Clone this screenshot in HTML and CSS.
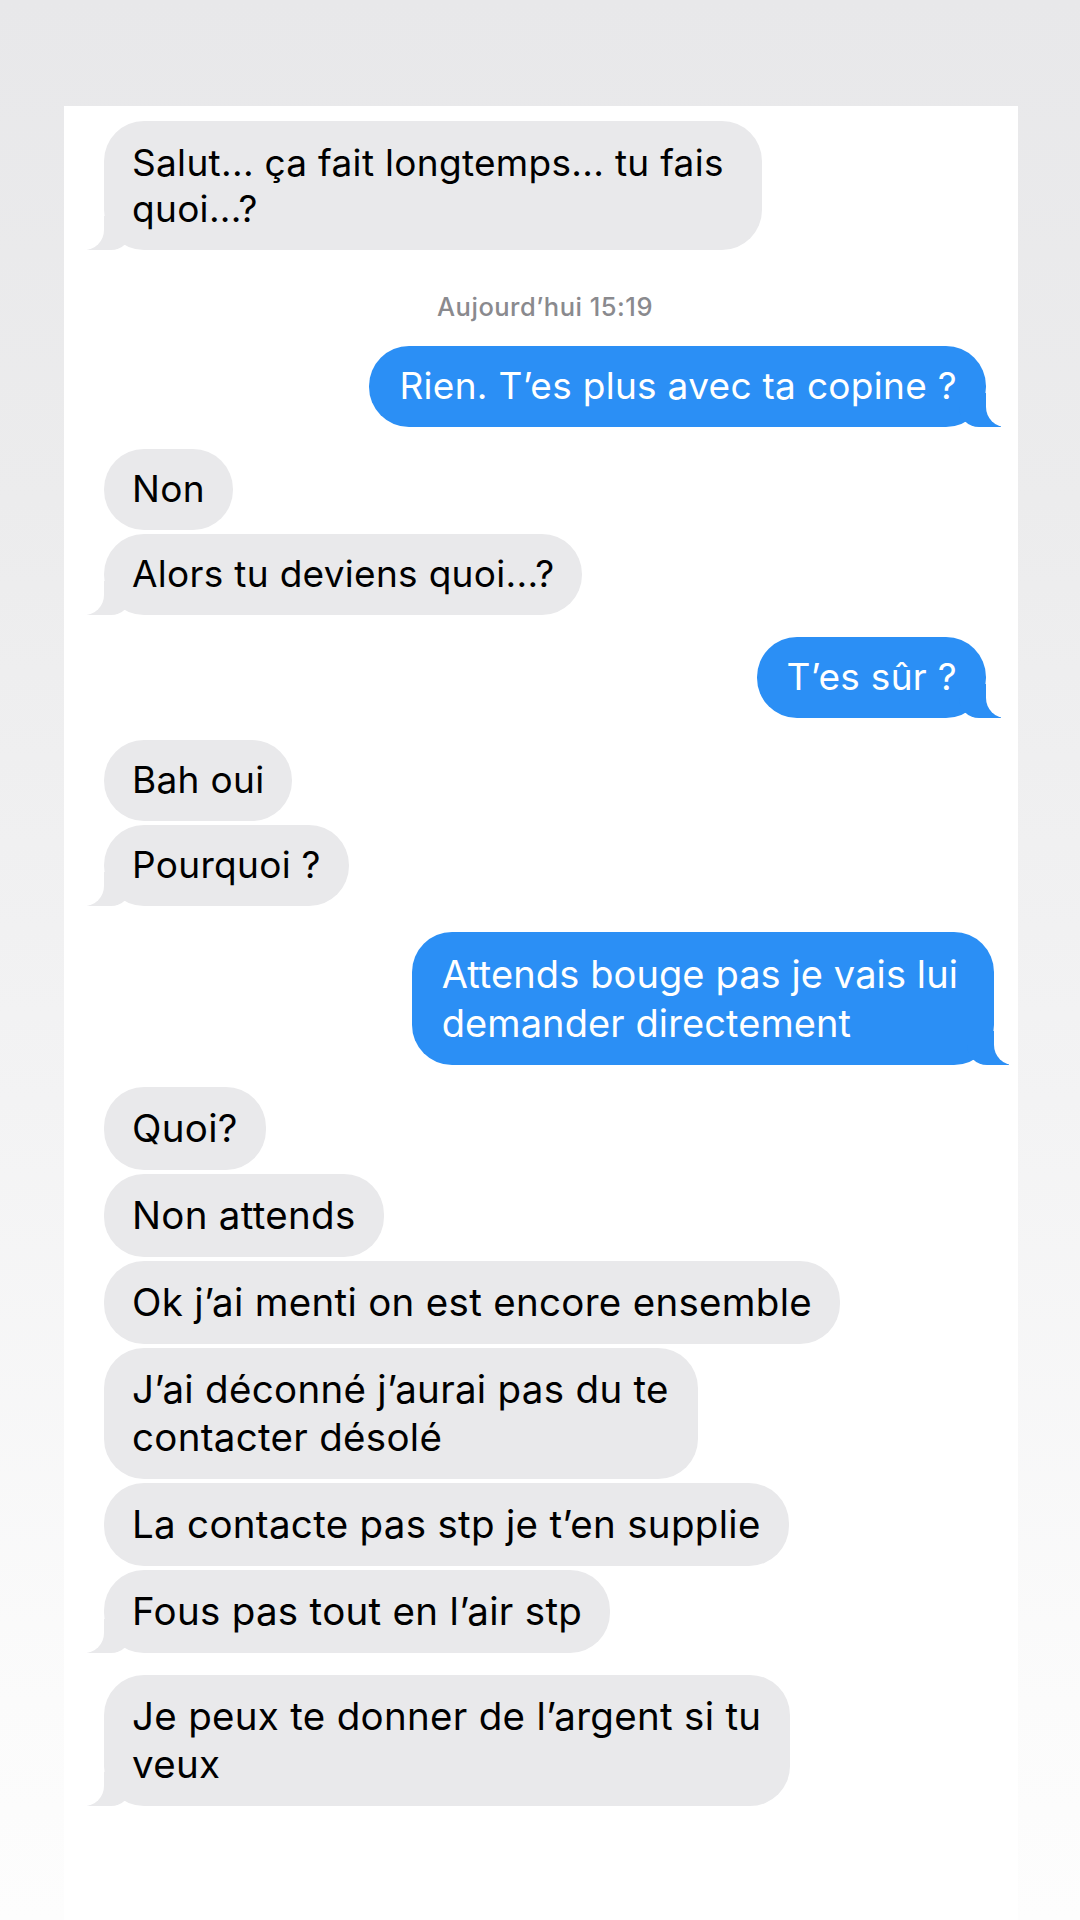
FILE: index.html
```html
<!DOCTYPE html>
<html lang="fr">
<head>
  <meta charset="UTF-8">
  <meta name="viewport" content="width=device-width, initial-scale=1.0">
  <title>Messages</title>
  <link rel="stylesheet" href="styles.css">
</head>
<body>
  <div class="shot">
    <div class="thread">
      <div class="bubble in tail wrap">Salut... ça fait longtemps... tu fais<br>quoi...?</div>

      <div class="stamp">Aujourd’hui 15:19</div>

      <div class="bubble out tail">Rien. T’es plus avec ta copine ?</div>

      <div class="bubble in first">Non</div>
      <div class="bubble in tail">Alors tu deviens quoi...?</div>

      <div class="bubble out tail first">T’es sûr ?</div>

      <div class="bubble in first">Bah oui</div>
      <div class="bubble in tail">Pourquoi ?</div>

      <div class="bubble out tail first big wrap">Attends bouge pas je vais lui<br>demander directement</div>

      <div class="lower">
        <div class="bubble in">Quoi?</div>
        <div class="bubble in">Non attends</div>
        <div class="bubble in">Ok j’ai menti on est encore ensemble</div>
        <div class="bubble in wrap">J’ai déconné j’aurai pas du te<br>contacter désolé</div>
        <div class="bubble in">La contacte pas stp je t’en supplie</div>
        <div class="bubble in tail">Fous pas tout en l’air stp</div>
        <div class="bubble in tail first wrap">Je peux te donner de l’argent si tu<br>veux</div>
      </div>
    </div>
  </div>
</body>
</html>
```

FILE: styles.css
```css
body {
  margin: 0;
  padding-top: 106px;
  min-height: 1814px;
  font-family: Inter, "Liberation Sans", sans-serif;
  background: linear-gradient(#e8e8ea 0, #ececed 500px, #f3f3f4 1100px, #fbfbfb 1700px, #fdfdfd 1920px);
}

.shot {
  margin-left: 64px;
  width: 954px;
  min-height: 1814px;
  background: #fff;
}

.thread {
  display: flex;
  flex-direction: column;
  padding: 15px 32px 0 40px;
  font-size: 37px;
  line-height: 46px;
  letter-spacing: 0.3px;
}

.lower {
  display: flex;
  flex-direction: column;
  margin-top: 22px;
  font-size: 38.5px;
  line-height: 48px;
}

.bubble {
  position: relative;
  padding: 17px 28px 18px;
  border-radius: 40px;
  margin-top: 4px;
}

.bubble.wrap {
  padding-right: 38px;
}

.lower .bubble.wrap {
  padding-right: 29px;
}

.bubble.first {
  margin-top: 22px;
}

.thread > .bubble:first-child {
  margin-top: 0;
  padding-top: 19px;
}

.lower > .bubble:first-child {
  margin-top: 0;
}

.in {
  align-self: flex-start;
  background: #e9e9eb;
  color: #000;
}

.out {
  align-self: flex-end;
  background: #2b8ff5;
  color: #fff;
  padding-left: 30px;
  padding-right: 29px;
}

.out.big {
  font-size: 38px;
  line-height: 49px;
  letter-spacing: 0.1px;
  padding: 18px 36px 17px 30px;
  margin-top: 26px;
  margin-right: -8px;
}

.stamp {
  align-self: center;
  margin: 42px 0 20px;
  font-size: 25.5px;
  line-height: 30px;
  font-weight: 500;
  letter-spacing: 0.5px;
  color: #8a8a8e;
}

/* bubble tails */
.tail::before,
.tail::after {
  content: "";
  position: absolute;
  bottom: 0;
  height: 34px;
}

.in.tail::before {
  left: -17px;
  width: 44px;
  background: #e9e9eb;
  border-bottom-right-radius: 20px;
}

.in.tail::after {
  left: -24px;
  width: 24px;
  background: #fff;
  border-bottom-right-radius: 20px;
}

.out.tail::before {
  right: -15px;
  width: 42px;
  background: #2b8ff5;
  border-bottom-left-radius: 20px;
}

.out.tail::after {
  right: -22px;
  width: 22px;
  background: #fff;
  border-bottom-left-radius: 20px;
}
```
